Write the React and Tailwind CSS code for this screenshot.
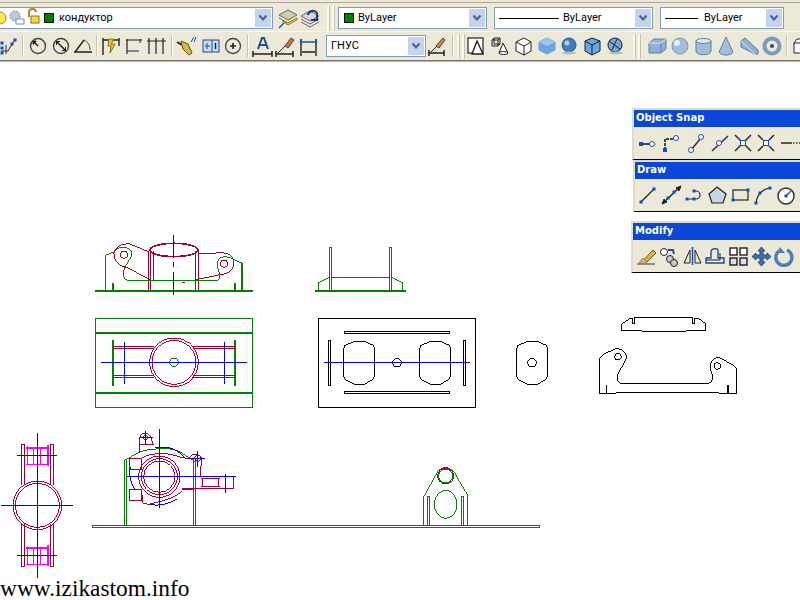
const RED = "#a5002e";
const GRN = "#008000";
const BLU = "#0000ff";
const MAG = "#ff00ff";

function Ico({ w = 23, h = 22, children }) {
  return (
    <svg width={w} height={h} viewBox={`0 0 ${w} ${h}`} fill="none" stroke="#222" strokeWidth="1" className="shrink-0">
      {children}
    </svg>
  );
}

function Chevron() {
  return (
    <div className="w-[16px] shrink-0 self-stretch m-px bg-[#c3d3f2] flex items-center justify-center">
      <svg width="10" height="8" viewBox="0 0 10 8" fill="none" stroke="#4d6185" strokeWidth="2">
        <path d="M1.5 1.5 5 5.5 8.5 1.5" />
      </svg>
    </div>
  );
}

function Combo({ className, children }) {
  return (
    <div className={`flex items-center bg-white border border-[#7f9db9] shrink-0 ${className}`}>
      <div className="flex-1 min-w-0 flex items-center">{children}</div>
      <Chevron />
    </div>
  );
}

function Sep({ className = "" }) {
  return <div className={`w-px h-[22px] bg-[#c4c1b0] border-r border-white shrink-0 box-content ${className}`} />;
}

function Grip({ className = "" }) {
  return (
    <div className={`flex gap-[2px] h-[25px] shrink-0 ${className}`}>
      <div className="w-[3px] bg-[#f8f7f0] border-r border-[#c5c2b0]" />
      <div className="w-[3px] bg-[#f8f7f0] border-r border-[#c5c2b0]" />
    </div>
  );
}

const Node = ({ x, y, s = 3, c = "#0a50c8" }) => <rect x={x - s / 2} y={y - s / 2} width={s} height={s} fill={c} stroke="none" />;
const Ring = ({ x, y, r = 2.5 }) => <circle cx={x} cy={y} r={r} fill="#fff" stroke="#0a50c8" />;

function Row2() {
  const dimBase = <path d="M2 19H21M2 16V22M21 16V22" strokeWidth="1.5" />;
  return (
    <div className="h-[29px] flex items-center bg-[#ece9d8] border-t border-[#f8f7f0] overflow-hidden">
      <Ico w={21}>
        <path d="M1 16H8L12 9 16 4" /><path d="M6 10V19" stroke="#333" />
        <Node x={2} y={8} /><Node x={2} y={13} /><Node x={2} y={18} /><Node x={12} y={9} /><Node x={15} y={5} />
      </Ico>
      <Sep className="ml-[1px] mr-[2px]" />
      <Ico><circle cx="12" cy="11" r="7.5" strokeWidth="1.4" stroke="#444" /><path d="M8 7 12 11" strokeWidth="1.6" /><path d="M7 6h3v1H8v2H7z" fill="#222" /></Ico>
      <Ico><circle cx="12" cy="11" r="7.5" strokeWidth="1.4" stroke="#444" /><path d="M8 7 16 15" strokeWidth="1.6" /><path d="M7 6h4v1H8v3H7zM17 16h-4v-1h3v-3h1z" fill="#222" stroke="none" /></Ico>
      <Ico><path d="M2 17H20" strokeWidth="1.5" /><path d="M3 17 12 5" strokeWidth="1.4" /><path d="M12 5C16 7 18 10 18 15" stroke="#444" /></Ico>
      <Sep className="ml-[1px] mr-[1px]" />
      <Ico>
        <path d="M4 3V20M20 3V11M4 5H20" strokeWidth="1.4" />
        <path d="M10 4 15 4 12 9 16 9 11 18 12 11 9 11Z" fill="#f2c82c" stroke="#8a7010" />
      </Ico>
      <Ico><path d="M5 4V19M20 5H4M5 16H17" strokeWidth="1.2" /><path d="M18 4V8" /></Ico>
      <Ico><path d="M4 3V19M11 3V19M18 3V19M2 6H21" strokeWidth="1.2" /></Ico>
      <Sep className="mx-[3px]" />
      <Ico>
        <path d="M1 7 6 10" strokeWidth="2" />
        <path d="M5 6 12 9 16 18 13 20 7 14Z" fill="#d9b93a" stroke="#5c5220" />
        <path d="M15 7 18 2M18 7 20 2" stroke="#0a50c8" />
      </Ico>
      <Ico>
        <rect x="4" y="5" width="16" height="12" fill="#c9dbf0" stroke="#1a4f9c" />
        <path d="M13 5V17" stroke="#1a4f9c" /><path d="M8 8V14M6 11H11" stroke="#1a4f9c" />
        <path d="M16.500 8V14" stroke="#123" strokeWidth="1.4" />
      </Ico>
      <Ico><circle cx="11" cy="11" r="7.5" strokeWidth="1.3" stroke="#444" /><path d="M11 8V14M8 11H14" strokeWidth="1.6" /></Ico>
      <Sep className="mx-[2px]" />
      <Ico>
        {dimBase}
        <path d="M7 14 11 3H13L17 14M9 10H15" stroke="#1a4f9c" strokeWidth="2" />
      </Ico>
      <Ico>
        <path d="M2 19H19M2 16V22M19 16V22" strokeWidth="1.5" /><path d="M4 18 12 10" />
        <path d="M11 11 17 3 20 5 14 13Z" fill="#c9744c" stroke="#6b3c20" />
      </Ico>
      <Ico>
        <path d="M4 4V21M19 4V21M5 17H18" strokeWidth="1.4" />
        <path d="M5 7H18" stroke="#1a4f9c" strokeWidth="1.5" /><path d="M5 4 3 7 5 10M18 4 20 7 18 10" stroke="#1a4f9c" />
      </Ico>
      <Combo className="w-[100px] h-[22px] ml-[6px] mr-[1px]">
        <span className="pl-[4px] text-[11px] text-black font-['Roboto',sans-serif]">ГНУС</span>
      </Combo>
      <Ico w={20}>
        <path d="M2 18H17M2 15V21M17 15V21" strokeWidth="1.5" /><path d="M4 17 10 11" />
        <path d="M9 11 16 3 18 5 12 13Z" fill="#c9844c" stroke="#6b3c20" />
      </Ico>
      <Sep className="ml-[5px] mr-[3px]" />
      <Grip className="mr-[1px]" />
      <Ico>
        <rect x="2" y="3" width="15" height="15" fill="#fff" strokeWidth="1.2" />
        <path d="M11 6 6 19H17Z" fill="#fff" strokeWidth="1.4" />
      </Ico>
      <Ico>
        <path d="M3 5H9V11H3ZM5 3H11V9H5ZM3 5 5 3M9 5 11 3M9 11 11 9" />
        <path d="M14 8 10 18H19Z" fill="#fff" /><ellipse cx="14.500" cy="18" rx="4.500" ry="1.500" fill="#fff" />
      </Ico>
      <Ico><path d="M4 7 12 3 19 7V16L12 20 4 16Z" fill="#fff" /><path d="M4 7 12 11 19 7M12 11V20" /></Ico>
      <Ico><path d="M4 7 12 3 20 7V15L12 19 4 15Z" fill="#6aa6e0" stroke="#6aa6e0" /><path d="M4 7 12 3 20 7 12 11Z" fill="#9cc8f0" stroke="none" /></Ico>
      <Ico><circle cx="11" cy="10" r="7" fill="#3d7fbe" stroke="#25608f" /><circle cx="9" cy="8" r="2.500" fill="#a9d0ef" stroke="none" /><ellipse cx="11" cy="18" rx="7" ry="1.500" fill="#bbb" stroke="none" /></Ico>
      <Ico><path d="M4 6 11 3 19 6V16L11 20 4 16Z" fill="#6aa6e0" stroke="#123" /><path d="M4 6 11 10 19 6M11 10V20" stroke="#123" /></Ico>
      <Ico><circle cx="11" cy="10" r="7" fill="#7aa6d0" stroke="#123" /><path d="M5 6 16 14M8 15 13 4" stroke="#123" /><ellipse cx="12" cy="18" rx="7" ry="1.500" fill="#bbb" stroke="none" /></Ico>
      <Grip className="ml-[6px] mr-[5px]" />
      <Ico><path d="M3 8 8 4H20V14L15 18H3Z" fill="#8fb1d4" stroke="#5b7fa6" /><path d="M3 8H15L20 4" fill="none" stroke="#dce8f4" /><path d="M15 8V18" stroke="#5b7fa6" /></Ico>
      <Ico><circle cx="11" cy="11" r="8" fill="#a3bedb" stroke="#7a9cc0" /><circle cx="8" cy="8" r="3" fill="#e4eef8" stroke="none" /></Ico>
      <Ico><path d="M4 6V16C4 21 19 21 19 16V6Z" fill="#a3bedb" stroke="#5b7fa6" /><ellipse cx="11.500" cy="6" rx="7.500" ry="2.500" fill="#dbe7f3" stroke="#5b7fa6" /></Ico>
      <Ico><path d="M11 2 4 17C6 21 16 21 18 17Z" fill="#a3bedb" stroke="#5b7fa6" /></Ico>
      <Ico><path d="M3 6 7 3 20 15V19H17L3 12Z" fill="#8fb1d4" stroke="#5b7fa6" /><path d="M3 6 17 19" stroke="#dce8f4" /></Ico>
      <Ico><circle cx="11" cy="11" r="7.500" fill="none" stroke="#7a9cc0" strokeWidth="4" /><circle cx="11" cy="11" r="2" fill="#445" stroke="none" /></Ico>
      <Sep className="ml-[2px] mr-[3px]" />
      <Ico><path d="M3 8 6 4H18V18H3Z" fill="#fff" /><path d="M3 8H18" /></Ico>
    </div>
  );
}

function Row1() {
  return (
    <div className="h-[28px] pt-[2px] flex items-center bg-[#ece9d8] overflow-hidden">
      <Combo className="w-[274px] h-[22px] ml-[-1px] mr-[4px] border-l-0">
        <svg width="59" height="20" viewBox="0 0 59 20" fill="none" className="shrink-0">
          <circle cx="1" cy="10" r="6" fill="#ffe84a" stroke="#8a8a30" />
          <circle cx="16" cy="8" r="5" fill="#b8cbe0" stroke="#7b8ea8" strokeDasharray="2 1" />
          <rect x="17" y="11" width="8" height="5" fill="#fff" stroke="#7b8ea8" />
          <path d="M30 9V5A3 3 0 0 1 37 4" stroke="#a08a20" strokeWidth="2" />
          <rect x="32" y="8" width="8" height="7" fill="#f1d84a" stroke="#8a7418" />
          <rect x="45.500" y="5.500" width="9" height="9" fill={GRN} stroke="#111" />
        </svg>
        <span className="ml-[1px] text-[11px] text-black font-['Roboto',sans-serif]">кондуктор</span>
      </Combo>
      <Ico w={23}>
        <path d="M2 8 11 3 20 8 11 13Z" fill="#c7d6a0" stroke="#667" />
        <path d="M2 11 11 16 20 11" stroke="#667" />
        <path d="M5 14 11 18 20 13 20 11 11 16Z" fill="#f2d24a" stroke="#9a8420" />
        <path d="M2 21 7 16" stroke="#0a50c8" strokeWidth="1.500" />
      </Ico>
      <Ico w={23}>
        <path d="M1 9 10 4 19 9 10 14Z" fill="#d5d9e2" stroke="#667" />
        <path d="M1 12 10 17 19 12M1 15 10 20 19 15" stroke="#667" />
        <path d="M8 8A5 5 0 0 1 17 6V13H11" stroke="#1a3f7c" strokeWidth="2" />
      </Ico>
      <Grip className="ml-[4px] mr-[3px]" />
      <Combo className="w-[149px] h-[22px] mr-[7px]">
        <svg width="19" height="12" viewBox="0 0 19 12" className="shrink-0 ml-[5px]">
          <rect x="0.500" y="1.500" width="9" height="9" fill={GRN} stroke="#111" />
        </svg>
        <span className="text-[11px] text-black font-['Roboto',sans-serif] -ml-[5px]">ByLayer</span>
      </Combo>
      <Combo className="w-[159px] h-[22px] mr-[7px]">
        <div className="w-[60px] h-px bg-black ml-[4px] mr-[4px]" />
        <span className="text-[11px] text-black font-['Roboto',sans-serif]">ByLayer</span>
      </Combo>
      <Combo className="w-[124px] h-[22px]">
        <div className="w-[33px] h-px bg-black ml-[4px] mr-[6px]" />
        <span className="text-[11px] text-black font-['Roboto',sans-serif]">ByLayer</span>
      </Combo>
    </div>
  );
}

const Pi = ({ children, w = 23 }) => <Ico w={w} h={22}>{children}</Ico>;

function Palette({ className, title, children }) {
  return (
    <div className={`absolute right-0 h-[52px] bg-[#ece9d8] border-t-2 border-l-2 border-[#dedbc9] border-b border-b-black overflow-hidden ${className}`}>
      <div className="h-[17px] bg-[#0a46d8] pl-[2px] text-white text-[10px] leading-[16px] font-bold font-['DejaVu_Sans',sans-serif] whitespace-nowrap">
        {title}
      </div>
      <div className="h-[32px] flex items-center pl-[2px]">{children}</div>
    </div>
  );
}

function Drawing() {
  const z = (x, y) => `translate(${x} ${y}) scale(0.3333)`;
  const pad = "M150 304H178L205 316Q208 320 208 328V408L205 418L178 433H150L120 418L115 408V328L120 316Z";
  return (
    <svg width="800" height="538" viewBox="0 62 800 538" fill="none" shapeRendering="crispEdges" strokeWidth="3" className="block">
      <g transform={z(85, 230)}>
        <ellipse cx="267" cy="60" rx="72" ry="20" stroke={RED} strokeWidth="5" />
        <path d="M192 62V180M198 62V180M205 62V152M333 62V180M340 62V180" stroke={RED} />
        <path d="M190 65 135 42C110 40 90 50 87 70 85 95 105 108 125 112L197 150M340 72 410 68C440 70 450 85 445 110 440 130 410 135 400 135L320 152M290 157H300" stroke={RED} />
        <circle cx="117" cy="74" r="11" stroke={RED} /><circle cx="417" cy="101" r="11" stroke={RED} />
        <path d="M62 183V75L88 66C95 50 130 45 140 65 145 85 115 105 115 130 115 145 125 153 135 153H385C405 153 408 140 402 125 390 100 400 80 420 80 440 80 450 95 470 98" stroke={GRN} />
        <path d="M30 183H503M83 160V183M450 160V183M470 98V183" stroke={GRN} strokeWidth="6" />
        <path d="M267 15V85M267 95V112M267 125V195" stroke={BLU} />
        <rect x="31" y="265" width="472" height="267" stroke={GRN} />
        <path d="M30 308H503M30 488H503M83 330V467M450 330V467" stroke={GRN} strokeWidth="6" />
        <path d="M85 349H208M85 356H208M325 349H450M325 356H450M85 436H208M85 443H208M325 436H450M325 443H450" stroke={RED} strokeWidth="3" />
        <circle cx="267" cy="397" r="73" stroke={RED} /><circle cx="267" cy="397" r="66" stroke={RED} />
        <circle cx="267" cy="397" r="13" stroke={GRN} />
        <path d="M48 397H486M118 336V462M418 336V462" stroke={BLU} />
      </g>
      <g transform={z(305, 240)}>
        <rect x="73" y="22" width="6" height="130" stroke={GRN} /><rect x="253" y="22" width="6" height="130" stroke={GRN} />
        <path d="M79 112H253M40 152V128L73 112M293 152V128L260 112" stroke={GRN} />
        <path d="M30 152H303" stroke={GRN} strokeWidth="6" />
        <rect x="40" y="235" width="472" height="267" stroke="#000" />
        <rect x="118" y="274" width="316" height="6" stroke="#000" /><rect x="118" y="454" width="316" height="6" stroke="#000" />
        <rect x="70" y="301" width="6" height="135" stroke="#000" /><rect x="475" y="301" width="6" height="135" stroke="#000" />
        <path d={pad} stroke="#000" /><path d={pad} transform="translate(228 0)" stroke="#000" /><path d={pad} transform="translate(519 0)" stroke="#000" />
        <circle cx="276" cy="368" r="13" stroke="#000" /><circle cx="681" cy="368" r="13" stroke="#000" />
        <path d="M57 367H494" stroke={BLU} />
      </g>
      <g transform={z(590, 310)} stroke="#000">
        <path d="M95 62V42L120 25H128V42H135V22H307V42H315V25H325L348 42V62H290L285 65H160L155 62Z" />
        <path d="M28 248V148L40 133 80 115C100 118 110 130 110 145L82 195C78 210 85 220 100 222H350C365 220 372 205 365 190 355 165 365 145 385 142L430 165C438 170 440 178 440 190V252H390L385 248H80L75 252H28" />
        <circle cx="84" cy="140" r="10" /><circle cx="382" cy="168" r="10" />
        <path d="M50 226V250M415 226V250" strokeWidth="5" />
      </g>
      <g transform={z(0, 425)}>
        <path d="M65 58V180M73 58V180M152 58V180M160 58V180M65 298V425M73 298V425M152 298V425M160 298V425" stroke={RED} strokeWidth="4" />
        <path d="M65 58H73M152 58H160M65 425H73M152 425H160" stroke={RED} />
        <circle cx="112" cy="241" r="73" stroke={RED} /><circle cx="112" cy="241" r="66" stroke={RED} />
        <path d="M78 68H148M78 368H148" stroke={MAG} strokeWidth="6" />
        <path d="M78 118H148M78 418H148M82 64V118M100 68V118M122 68V118M144 60V122M82 364V418M100 368V418M122 368V418M144 360V422" stroke={MAG} />
        <path d="M146 60V122M146 360V422" stroke={MAG} strokeWidth="5" />
        <path d="M112 25V458M52 91H172M3 241H220M52 391H172" stroke={BLU} />
        <path d="M374 105V300M380 105V300M580 100V300M586 100V300" stroke={GRN} />
        <path d="M374 105 385 100C410 85 430 72 470 72H510C540 75 560 95 575 103L586 110" stroke={GRN} />
        <path d="M392 125C385 145 392 175 405 195M450 238C480 245 510 235 530 222M465 68H505C525 70 540 85 552 95" stroke={BLU} />
        <circle cx="478" cy="155" r="62" stroke={RED} /><circle cx="478" cy="155" r="54" stroke={RED} /><circle cx="478" cy="155" r="47" stroke={RED} />
        <path d="M418 62V42C420 28 430 24 437 24 448 26 452 35 455 45L460 60H418M420 62V85M425 100C445 85 500 78 545 98L565 100C575 88 585 85 595 90 605 92 605 100 603 125V155H700V192H545L580 195M545 200C525 215 505 225 445 238L428 235 425 195" stroke={RED} />
        <rect x="388" y="100" width="37" height="33" stroke={RED} /><rect x="388" y="195" width="37" height="32" stroke={RED} />
        <path d="M602 162H660M602 185H660M608 162V185M655 162V185" stroke={RED} strokeWidth="3" />
        <circle cx="593" cy="100" r="9" stroke={RED} /><circle cx="437" cy="38" r="7" stroke={RED} />
        <path d="M478 12V250M380 155H708M676 148V203M437 18V60M420 38H458M593 78V125M565 102H615" stroke={BLU} />
      </g>
      <rect x="92.500" y="525.500" width="447" height="2" stroke={GRN} strokeWidth="1" />
      <g transform={z(400, 455)}>
        <path d="M70 211V128L110 55C115 45 125 38 137 38 150 38 165 50 170 65L203 120V211" stroke={GRN} />
        <rect x="82" y="124" width="7" height="87" stroke={GRN} /><rect x="184" y="124" width="7" height="87" stroke={GRN} />
        <ellipse cx="137" cy="148" rx="34" ry="42" stroke={GRN} />
        <circle cx="137" cy="63" r="24" stroke={RED} /><circle cx="137" cy="63" r="21" stroke={GRN} />
      </g>
    </svg>
  );
}

export default function App() {
  return (
    <div className="relative w-[800px] h-[600px] overflow-hidden bg-white">
      <div className="h-[3px] bg-[#ece9d8] border-b border-[#aca899]" />
      <Row1 />
      <Row2 />
      <div className="h-[2px] bg-[#7a7868] border-b border-[#b8b6a8]" />
      <div className="relative h-[538px]">
        <Drawing />
        <div className="absolute left-0 top-[514px] text-[23.4px] leading-[24px] text-black font-['Liberation_Serif',serif] whitespace-nowrap">
          www.izikastom.info
        </div>
        <Palette className="top-[46px] w-[168px]" title="Object Snap">
          <Pi><path d="M3 12H15" stroke="#444" strokeWidth="2" /><Node x={5} y={12} s={4} /><Ring x={16} y={12} /></Pi>
          <Pi><path d="M6 18V7H14" stroke="#444" strokeWidth="2" strokeDasharray="3 1" /><Node x={6} y={18} s={4} /><Ring x={17} y={6} /></Pi>
          <div className="w-px h-[20px] bg-[#b9b7a8] mx-[2px]" />
          <Pi><path d="M5 18 15 6" stroke="#333" strokeWidth="1.500" /><Ring x={5} y={18} /><Ring x={15} y={5} /></Pi>
          <Pi><path d="M3 19 19 4" stroke="#333" strokeWidth="1.500" /><Ring x={10} y={11} /></Pi>
          <Pi><path d="M3 3 19 19M19 3 3 19" stroke="#333" strokeWidth="1.600" /><rect x="8.500" y="8.500" width="5" height="5" fill="#fff" stroke="#0a50c8" /></Pi>
          <Pi><path d="M3 19 8 14M14 8 19 3M3 3 8 8M14 14 19 19" stroke="#333" strokeWidth="1.600" /><rect x="8.500" y="8.500" width="5" height="5" fill="#fff" stroke="#0a50c8" /></Pi>
          <Pi><path d="M3 11H14" stroke="#333" strokeWidth="1.600" /><path d="M15 11H23" stroke="#333" strokeWidth="1.600" strokeDasharray="1.500 1.500" /></Pi>
        </Palette>
        <Palette className="top-[98px] w-[167px]" title="Draw">
          <Pi><path d="M4 18 17 5" stroke="#222" strokeWidth="1.200" /><Node x={4} y={18} s={3} /><Node x={17} y={5} s={3} /></Pi>
          <Pi><path d="M3 19 20 3" stroke="#222" strokeWidth="1.400" /><path d="M2 20 4 15 7 18ZM21 2 16 4 19 7Z" fill="#222" /><Node x={8} y={14} s={3} /><Node x={14} y={8} s={3} /></Pi>
          <Pi><path d="M4 15H12M12 7H13A4 4 0 0 1 13 15H12" stroke="#333" strokeWidth="1.200" /><Node x={4} y={15} s={3} /><Node x={11} y={15} s={3} /><Node x={11} y={7} s={3} /></Pi>
          <Pi><path d="M11 3 20 10 17 19H6L3 10Z" fill="#c7d6e4" stroke="#222" strokeWidth="1.200" /></Pi>
          <Pi><rect x="4" y="6" width="15" height="10" fill="#ece9d8" stroke="#222" strokeWidth="1.200" /><Node x={4} y={16} s={3} /><Node x={19} y={6} s={3} /></Pi>
          <Pi><path d="M4 19C5 11 10 5 18 4" stroke="#222" strokeWidth="1.200" /><Node x={4} y={19} s={3} /><Node x={8} y={9} s={3} /><Node x={18} y={4} s={3} /></Pi>
          <Pi><circle cx="11" cy="12" r="8" fill="#fff" stroke="#333" strokeWidth="1.500" /><path d="M11 12 16 7" stroke="#0a50c8" strokeWidth="1.500" /><Node x={11} y={12} s={3} /></Pi>
        </Palette>
        <Palette className="top-[159px] w-[169px]" title="Modify">
          <Pi><path d="M2 19H20" stroke="#333" /><path d="M6 18 18 5 21 8 11 18Z" fill="#d9b93a" stroke="#6b5a20" /><path d="M4 18 8 13 12 17 10 19Z" fill="#e0a0a0" stroke="#884" /></Pi>
          <Pi><circle cx="6" cy="7" r="3.500" fill="#fff" stroke="#222" /><circle cx="12" cy="14" r="3.500" fill="#c9c9c9" stroke="#222" /><circle cx="16" cy="18" r="3.500" fill="#c9c9c9" stroke="#222" /><path d="M10 5H15L16 9" stroke="#1a4f9c" strokeWidth="2" /></Pi>
          <Pi><path d="M9 5V18H3ZM14 5V18H20Z" fill="#ece9d8" stroke="#222" /><path d="M11.500 2V20" stroke="#0a50c8" strokeWidth="1.500" /></Pi>
          <Pi><path d="M2 18H20V13H14V5C14 3 7 3 7 7V13H2Z" stroke="#1a4f9c" strokeWidth="1.400" /><path d="M2 15H16V8" stroke="#222" /></Pi>
          <Pi><rect x="3" y="3" width="7" height="7" fill="#fff" stroke="#111" strokeWidth="1.300" /><rect x="13" y="3" width="7" height="7" fill="#fff" stroke="#111" strokeWidth="1.300" /><rect x="3" y="13" width="7" height="7" fill="#dde" stroke="#111" strokeWidth="1.300" /><rect x="13" y="13" width="7" height="7" fill="#dde" stroke="#111" strokeWidth="1.300" /></Pi>
          <Pi><path d="M11.500 2 15 6H13V10H17V8L21 11.500 17 15V13H13V17H15L11.500 21 8 17H10V13H6V15L2 11.500 6 8V10H10V6H8Z" fill="#3f6fa8" stroke="#24507f" /></Pi>
          <Pi><path d="M14 5A8 8 0 1 1 6 6" stroke="#4f7fb4" strokeWidth="3.500" /><path d="M7 2 12 8H4Z" fill="#4f7fb4" stroke="none" /></Pi>
        </Palette>
      </div>
    </div>
  );
}
